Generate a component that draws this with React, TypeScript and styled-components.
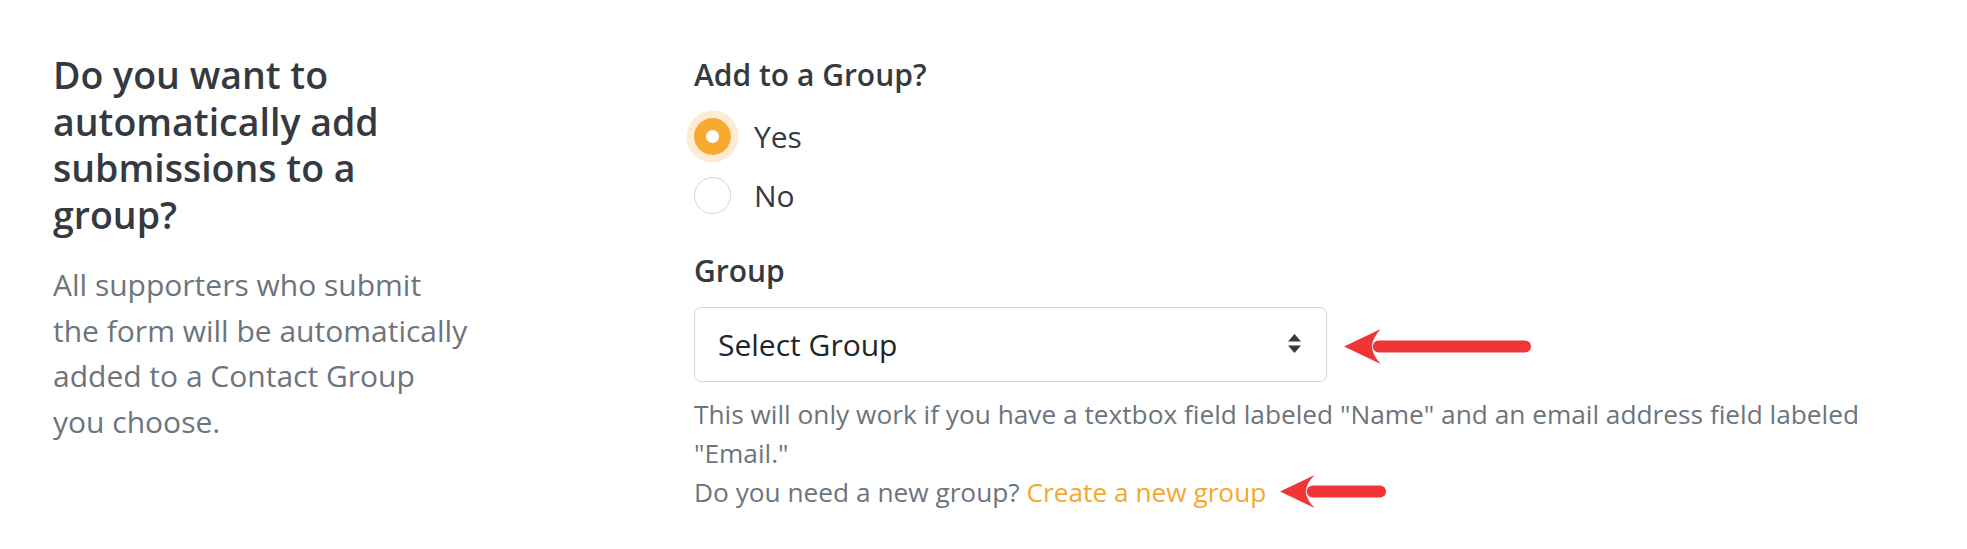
import React from "react";
import styled, { createGlobalStyle } from "styled-components";

const GlobalStyle = createGlobalStyle`
  html, body {
    margin: 0;
    padding: 0;
    background: #ffffff;
  }
  body {
    font-family: "Open Sans", "Liberation Sans", sans-serif;
    color: #343a40;
  }
`;

const Page = styled.section`
  display: flex;
  align-items: flex-start;
  min-height: 549px;
  padding: 52px 0 0 53px;
  box-sizing: border-box;
`;

const Intro = styled.div`
  width: 417px;
  margin-right: 224px;
`;

const Heading = styled.h3`
  margin: 0;
  font-size: 37.5px;
  line-height: 46.5px;
  font-weight: 600;
  color: #343a40;
`;

const Lead = styled.p`
  margin: 24px 0 0;
  font-size: 30px;
  line-height: 45.5px;
  color: #6c757d;
`;

const Fields = styled.div`
  width: 1220px;
`;

const Label = styled.div<{ $gap?: number }>`
  margin-top: ${(p) => p.$gap ?? 0}px;
  font-size: 30px;
  line-height: 45px;
  font-weight: 600;
  color: #343a40;
`;

const RadioList = styled.div`
  display: flex;
  flex-direction: column;
  gap: 14px;
  margin-top: 17px;
`;

const RadioRow = styled.label`
  display: flex;
  align-items: center;
  gap: 23px;
  font-size: 30px;
  line-height: 45px;
  color: #343a40;
`;

const RadioDot = styled.span<{ $checked?: boolean }>`
  width: 37px;
  height: 37px;
  border-radius: 50%;
  box-sizing: border-box;
  display: flex;
  align-items: center;
  justify-content: center;
  background: ${(p) => (p.$checked ? "#f6ab30" : "#ffffff")};
  border: ${(p) => (p.$checked ? "none" : "1.5px solid #d3d3d3")};
  box-shadow: ${(p) => (p.$checked ? "0 0 0 7.5px #fdecd2" : "none")};

  &::after {
    content: "";
    display: ${(p) => (p.$checked ? "block" : "none")};
    width: 13px;
    height: 13px;
    border-radius: 50%;
    background: #ffffff;
  }
`;

const SelectRow = styled.div`
  display: flex;
  align-items: center;
  gap: 16px;
  margin-top: 13.5px;
`;

const SelectBox = styled.div`
  width: 633px;
  height: 75px;
  box-sizing: border-box;
  display: flex;
  align-items: center;
  justify-content: space-between;
  padding: 0 25px 0 23px;
  border: 1.5px solid #d4d4d4;
  border-radius: 7px;
  font-size: 30px;
  color: #212529;
  background: #ffffff;
`;

const SideArrow = styled.span`
  display: flex;
  margin-top: 5px;
`;

const Help = styled.p`
  margin: 13px 0 0;
  font-size: 26.25px;
  line-height: 39.4px;
  color: #6c757d;
`;

const Link = styled.a`
  color: #f5a82e;
  text-decoration: none;
`;

const InlineArrow = styled.span`
  display: inline-block;
  margin-left: 13px;
  vertical-align: middle;
  line-height: 0;
  position: relative;
  top: -4px;
`;

const Caret = () => (
  <svg width="13" height="20" viewBox="0 0 13 20">
    <path d="M6.5 0 L13 7.5 L0 7.5 Z" fill="#343a40" />
    <path d="M0 11.5 L13 11.5 L6.5 19 Z" fill="#343a40" />
  </svg>
);

const RedArrow = ({ length, head }: { length: number; head: number }) => {
  const h = head;
  const mid = h / 2;
  const back = h * 1.02;
  return (
    <svg width={length} height={h} viewBox={`0 0 ${length} ${h}`}>
      <rect x={back - 8} y={mid - 6} width={length - back + 8} height={12} rx={6} fill="#ef3535" />
      <path
        d={`M1 ${mid} L${back} 1 Q${back - 8} ${mid - 9} ${back - 9} ${mid} Q${back - 8} ${mid + 9} ${back} ${h - 1} Z`}
        fill="#ef3535"
      />
    </svg>
  );
};

export default function App() {
  return (
    <>
      <GlobalStyle />
      <Page>
        <Intro>
          <Heading>Do you want to automatically add submissions to a group?</Heading>
          <Lead>
            All supporters who submit the form will be automatically added to a Contact Group you
            choose.
          </Lead>
        </Intro>

        <Fields>
          <Label>Add to a Group?</Label>
          <RadioList>
            <RadioRow>
              <RadioDot $checked />
              Yes
            </RadioRow>
            <RadioRow>
              <RadioDot />
              No
            </RadioRow>
          </RadioList>

          <Label $gap={30}>Group</Label>
          <SelectRow>
            <SelectBox>
              <span>Select Group</span>
              <Caret />
            </SelectBox>
            <SideArrow>
              <RedArrow length={188} head={37} />
            </SideArrow>
          </SelectRow>

          <Help>
            This will only work if you have a textbox field labeled "Name" and an email address
            field labeled "Email."
            <br />
            Do you need a new group? <Link href="#">Create a new group</Link>
            <InlineArrow>
              <RedArrow length={107} head={35} />
            </InlineArrow>
          </Help>
        </Fields>
      </Page>
    </>
  );
}
